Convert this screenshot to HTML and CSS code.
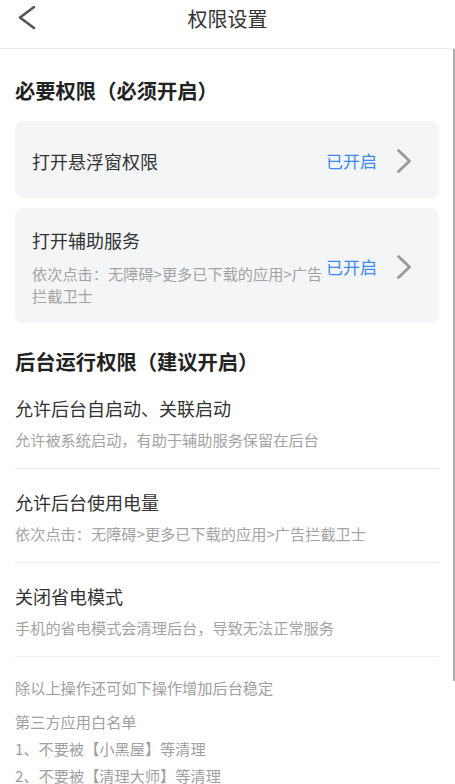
FILE: index.html
```html
<!DOCTYPE html>
<html lang="zh-CN">
<head>
  <meta charset="UTF-8" />
  <meta name="viewport" content="width=device-width, initial-scale=1.0"/>
  <title>权限设置</title>
  <link rel="stylesheet" href="styles.css">
</head>
<body>

  <!-- Header -->
  <header class="topbar">
    <a class="back" href="#">
      <svg width="20" height="26" viewBox="0 0 20 26"><path d="M17 2 L3 12.5 L17 23" fill="none" stroke="#555" stroke-width="2.6" stroke-linecap="round" stroke-linejoin="round"/></svg>
    </a>
    <h1 class="page-title">权限设置</h1>
    <span></span>
  </header>

  <main class="content">

    <!-- Required -->
    <section class="required">
      <h2 class="section-title">必要权限（必须开启）</h2>
      <div class="card-list">
        <div class="card card-single">
          <div class="card-text">
            <div class="item-title">打开悬浮窗权限</div>
          </div>
          <span class="status">已开启</span>
          <svg class="arrow" width="14" height="24" viewBox="0 0 14 24"><path d="M1.5 1.5 L12.5 12 L1.5 22.5" fill="none" stroke="#9a9a9a" stroke-width="2.8" stroke-linecap="round" stroke-linejoin="round"/></svg>
        </div>
        <div class="card">
          <div class="card-text">
            <div class="item-title">打开辅助服务</div>
            <div class="card-desc">依次点击：无障碍&gt;更多已下载的应用&gt;广告拦截卫士</div>
          </div>
          <span class="status">已开启</span>
          <svg class="arrow" width="14" height="24" viewBox="0 0 14 24"><path d="M1.5 1.5 L12.5 12 L1.5 22.5" fill="none" stroke="#9a9a9a" stroke-width="2.8" stroke-linecap="round" stroke-linejoin="round"/></svg>
        </div>
      </div>
    </section>

    <!-- Background -->
    <section class="background">
      <h2 class="section-title">后台运行权限（建议开启）</h2>
      <div class="item">
        <div class="item-title">允许后台自启动、关联启动</div>
        <div class="item-desc">允许被系统启动，有助于辅助服务保留在后台</div>
      </div>
      <div class="item">
        <div class="item-title">允许后台使用电量</div>
        <div class="item-desc">依次点击：无障碍&gt;更多已下载的应用&gt;广告拦截卫士</div>
      </div>
      <div class="item">
        <div class="item-title">关闭省电模式</div>
        <div class="item-desc">手机的省电模式会清理后台，导致无法正常服务</div>
      </div>
    </section>

    <!-- Notes -->
    <section class="notes">
      <p class="note-lead">除以上操作还可如下操作增加后台稳定</p>
      <p>第三方应用白名单</p>
      <p>1、不要被【小黑屋】等清理</p>
      <p>2、不要被【清理大师】等清理</p>
    </section>

  </main>

  <div class="scrollbar"></div>

</body>
</html>
```

FILE: styles.css
```css
/* Global */
html {
  scrollbar-width: none;
}

::-webkit-scrollbar {
  width: 0;
}

body {
  font-family: "Noto Sans CJK SC", "Noto Sans", sans-serif;
  margin: 0;
  padding: 0;
  background-color: #ffffff;
  color: #333;
}

/* Header */
.topbar {
  display: grid;
  grid-template-columns: 1fr auto 1fr;
  align-items: start;
  height: 48px;
  border-bottom: 1px solid #ececec;
}

.back {
  display: block;
  width: 20px;
  height: 26px;
  margin: 5px 0 0 17px;
}

.page-title {
  margin: 0;
  font-size: 20px;
  font-weight: normal;
  line-height: 38px;
  color: #333;
}

/* Content */
.content {
  padding: 0 16px 0 15px;
}

.section-title {
  margin: 0;
  font-size: 20.3px;
  font-weight: bold;
  line-height: 28px;
  color: #222;
}

.required {
  padding-top: 27px;
}

.card-list {
  display: flex;
  flex-direction: column;
  gap: 10px;
  margin-top: 17px;
}

.card {
  display: flex;
  align-items: center;
  box-sizing: border-box;
  padding: 19px 28px 17px 17px;
  background-color: #f4f5f7;
  border-radius: 8px;
}

.card-single {
  min-height: 77px;
}

.card-text {
  flex: 1;
  min-width: 0;
}

.item-title {
  font-size: 18px;
  line-height: 26px;
  color: #333;
}

.card-desc {
  margin-top: 9px;
  font-size: 15.2px;
  line-height: 22px;
  color: #a3a3a3;
}

.status {
  font-size: 17px;
  line-height: 24px;
  color: #3d89f4;
}

.arrow {
  display: block;
  margin-left: 20px;
}

/* Background section */
.background {
  padding-top: 24px;
}

.item {
  padding: 20px 0 18px;
  border-bottom: 1px solid #ededed;
}

.item-desc {
  margin-top: 7px;
  font-size: 15.2px;
  line-height: 22px;
  color: #a3a3a3;
}

/* Notes */
.notes {
  padding-top: 17px;
}

.notes p {
  margin: 0;
  font-size: 15.2px;
  line-height: 27px;
  color: #a0a0a0;
}

.notes .note-lead {
  margin-bottom: 7px;
}

/* Scroll indicator */
.scrollbar {
  position: fixed;
  top: 49px;
  right: 0;
  width: 2px;
  height: 632px;
  background-color: #acacac;
}
```
